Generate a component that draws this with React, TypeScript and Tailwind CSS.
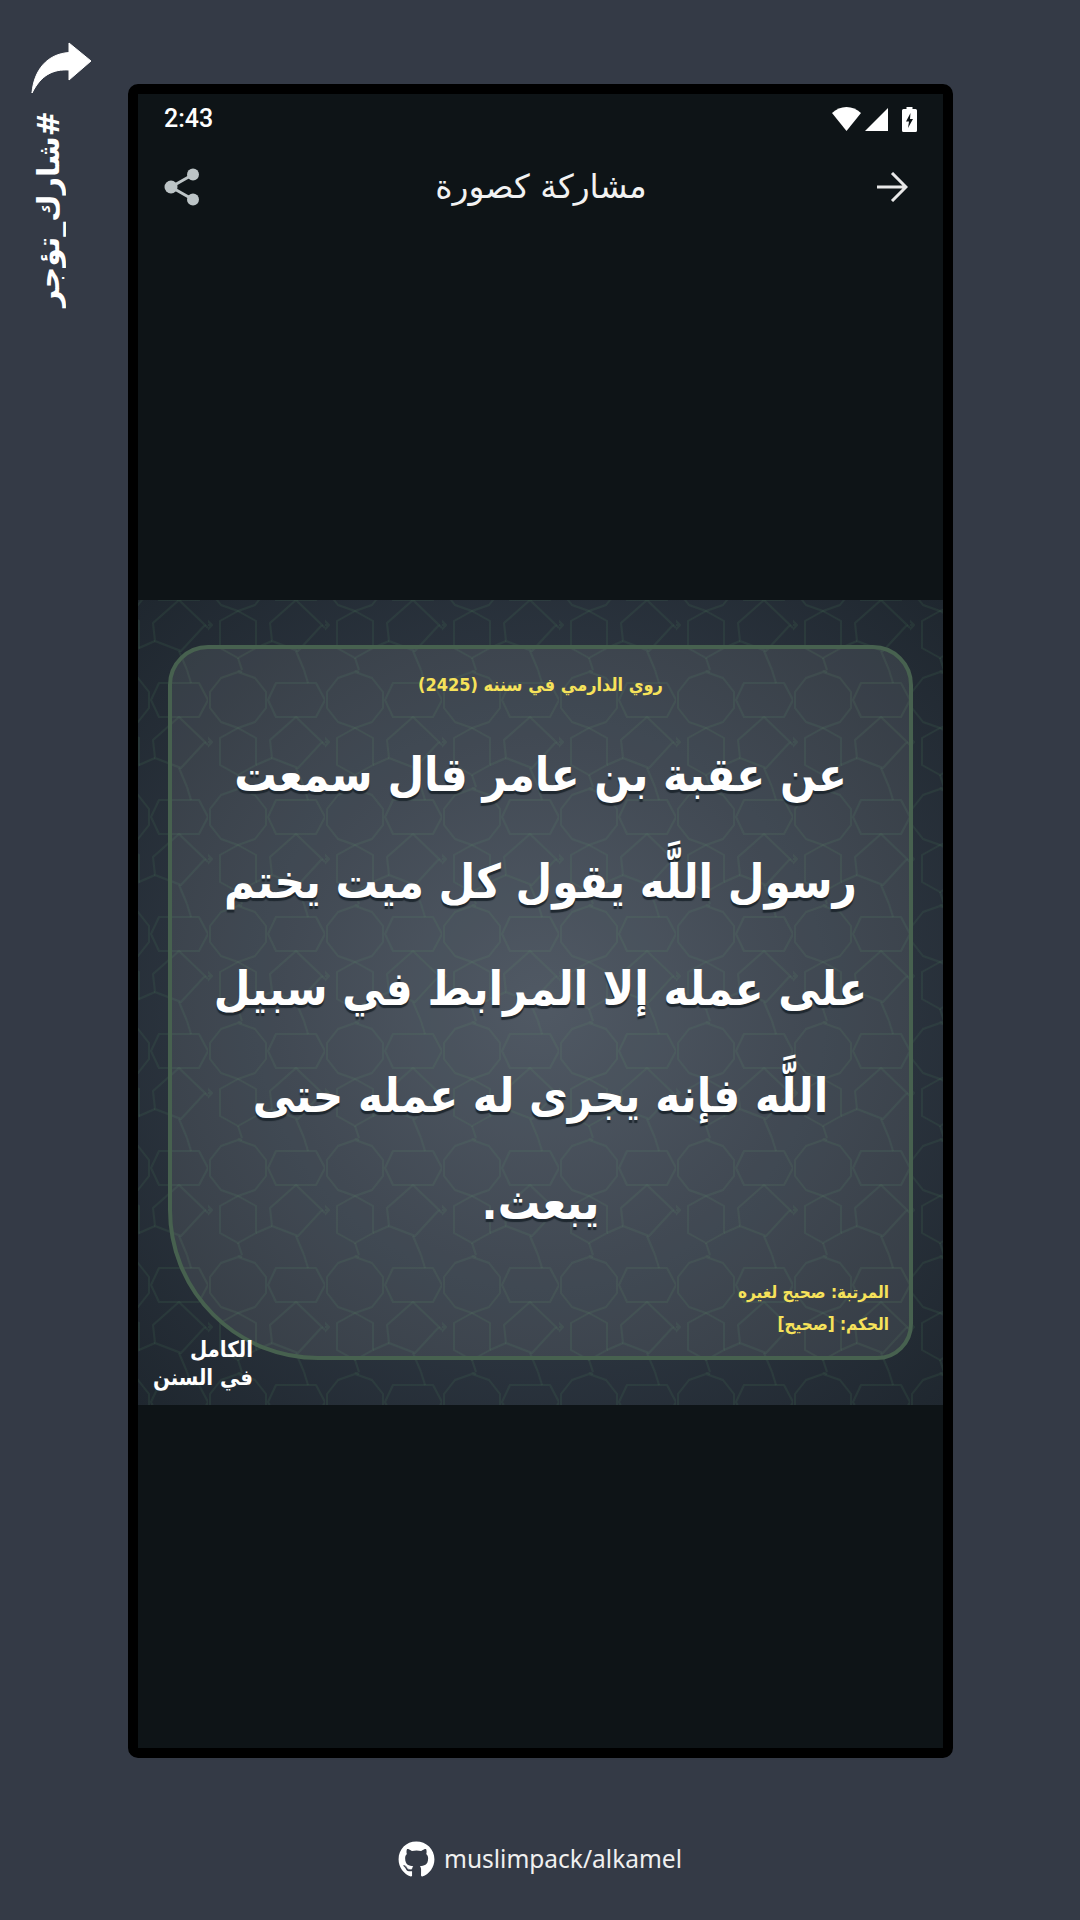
import { FaGithub } from "react-icons/fa";

const bodyLines = [
  "عن عقبة بن عامر قال سمعت",
  "رسول اللَّه يقول كل ميت يختم",
  "على عمله إلا المرابط في سبيل",
  "اللَّه فإنه يجرى له عمله حتى",
  "يبعث.",
];

function StarPattern() {
  return (
    <svg className="absolute inset-0 h-full w-full" viewBox="0 0 805 805">
      <defs>
        <pattern id="stars" width="117" height="117" patternUnits="userSpaceOnUse" x="70" y="70">
          <g fill="none" stroke="#4f8a5e" strokeOpacity="0.14" strokeWidth="2" strokeLinejoin="round">
            <path d="M30 2 L47 8 L58 22 L58 38 L47 52 L30 58 L13 52 L2 38 L2 22 L13 8 Z" />
            <path d="M68 13 H108 L117 30 L108 47 H68 L60 30 Z" />
            <path d="M30 58 L48 68 V95 L30 105 L12 95 V68 Z" />
            <path d="M88 47 L114 72 L90 98 L64 88 L62 70 Z" />
            <path d="M-22 47 L4 72 L-20 98 M114 72 L117 75 M0 72 L4 72" />
            <path d="M88 98 L96 117 M30 105 L34 117 M30 0 L34 2 M96 0 L100 13 M64 88 L48 95" />
          </g>
        </pattern>
      </defs>
      <rect width="805" height="805" fill="url(#stars)" />
    </svg>
  );
}

function StatusBar() {
  return (
    <div className="flex h-[46px] items-center justify-between pl-[26px] pr-[26px] pt-1">
      <span className="font-['Roboto',sans-serif] text-[25px] font-medium text-white">2:43</span>
      <div className="flex items-center gap-[4px]">
        <svg width="29" height="24" viewBox="0 0 29 24">
          <path d="M14.5 24 L0 6 C8 -2 21 -2 29 6 Z" fill="#fff" />
        </svg>
        <svg width="23" height="23" viewBox="0 0 23 23">
          <path d="M0 23 L23 0 V23 Z" fill="#fff" />
        </svg>
        <svg className="ml-[10px]" width="15" height="25" viewBox="0 0 15 25">
          <path
            fillRule="evenodd"
            d="M4.5 0 H10.5 V2 H13.5 Q15 2 15 3.5 V23.5 Q15 25 13.5 25 H1.5 Q0 25 0 23.5 V3.5 Q0 2 1.5 2 H4.5 Z M8.5 6 L4 14.5 H7 L6 21 L11 12 H8 Z"
            fill="#fff"
          />
        </svg>
      </div>
    </div>
  );
}

function Toolbar() {
  return (
    <div className="flex h-[94px] items-center justify-between pl-[26px] pr-[35px]">
      <svg width="36" height="38" viewBox="0 0 36 38" fill="#bcc4c6">
        <circle cx="7" cy="19" r="6.5" />
        <circle cx="29" cy="6.5" r="6" />
        <circle cx="29" cy="31.5" r="6" />
        <path d="M7 19 L29 6.5 M7 19 L29 31.5" stroke="#bcc4c6" strokeWidth="3" />
      </svg>
      <span dir="rtl" className="ml-[6px] font-['DejaVu_Sans',sans-serif] text-[33px] text-[#f2f2f2]">
        مشاركة كصورة
      </span>
      <svg width="32" height="30" viewBox="0 0 32 30" fill="none" stroke="#e8e8e8" strokeWidth="3">
        <path d="M1 15 H30 M16 1 L30 15 L16 29" />
      </svg>
    </div>
  );
}

function HadithCard() {
  return (
    <div className="relative h-[805px] w-[805px] bg-[radial-gradient(circle_at_50%_50%,#3f4955_0%,#2e3742_50%,#1f272f_100%)] px-[30px] py-[45px]">
      <StarPattern />
      <div
        dir="rtl"
        className="relative flex h-[715px] flex-col rounded-tl-[40px] rounded-tr-[40px] rounded-br-[36px] rounded-bl-[150px] border-[4px] border-[#47614f] bg-white/[0.09] px-[20px] font-['DejaVu_Sans_Condensed','DejaVu_Sans',sans-serif]"
      >
        <p className="mt-[21px] text-center text-[18px] leading-[30px] font-bold text-[#f6e25a]">
          روي الدارمي في سننه (2425)
        </p>
        <div className="mt-[21px] flex flex-col items-center">
          {bodyLines.map((line) => (
            <p
              key={line}
              className="h-[107px] text-center text-[47px] leading-[107px] font-bold whitespace-nowrap text-white [text-shadow:0_3px_1px_#1f2830]"
            >
              {line}
            </p>
          ))}
        </div>
        <div className="mt-auto mb-[16px] text-[17px] leading-[32px] font-bold text-[#f6e25a]">
          <p>المرتبة: صحيح لغيره</p>
          <p>الحكم: [صحيح]</p>
        </div>
      </div>
      <div
        dir="rtl"
        className="absolute bottom-[13px] left-[13px] w-[102px] font-['DejaVu_Sans_Condensed','DejaVu_Sans',sans-serif] text-[22px] leading-[28px] font-bold whitespace-nowrap text-white"
      >
        <p>الكامل</p>
        <p>في السنن</p>
      </div>
    </div>
  );
}

export default function App() {
  return (
    <div className="relative flex h-[1920px] w-[1080px] flex-col bg-[#343a46]">
      <div className="flex h-[1758px] items-start">
        <div className="flex w-[128px] flex-col items-start pl-[31px] pt-[42px]">
          <svg width="61" height="51" viewBox="0 0 61 51">
            <path
              d="M1 51 C3 28 16 12 38 10.5 V1 L60 19 L38 38 V28 C22 27 10 33 1 51 Z"
              fill="#fff"
              stroke="#fff"
              strokeLinejoin="round"
            />
          </svg>
          <span
            dir="rtl"
            className="mt-[18px] rotate-180 font-['DejaVu_Sans',sans-serif] text-[30px] leading-[36px] font-bold text-white [writing-mode:vertical-rl]"
          >
            #شارك_تؤجر
          </span>
        </div>
        <div className="mt-[84px] flex h-[1674px] w-[825px] flex-col rounded-[10px] border-[10px] border-black bg-[#0e1417]">
          <StatusBar />
          <Toolbar />
          <div className="flex flex-1 items-start justify-center pt-[366px]">
            <HadithCard />
          </div>
        </div>
      </div>
      <div className="flex h-[162px] items-center justify-center gap-[9px] pt-[40px] font-['Noto_Sans',sans-serif] text-[24.5px] text-[#f0f0f0]">
        <FaGithub className="text-[37px] text-white" />
        <span>muslimpack/alkamel</span>
      </div>
    </div>
  );
}
